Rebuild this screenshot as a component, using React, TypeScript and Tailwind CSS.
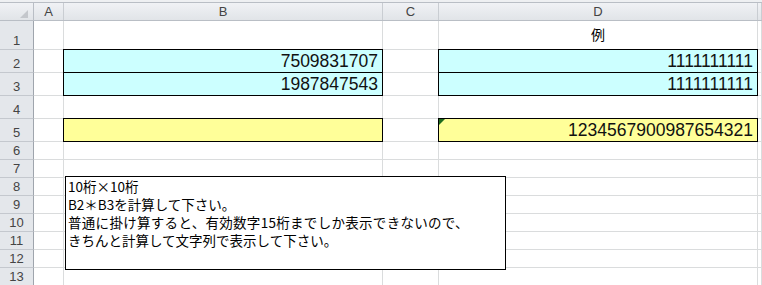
import React from "react"

const rowHeights = ["h-[29px]", "h-[23px]", "h-[23px]", "h-[23px]", "h-[23px]", "h-[18px]", "h-[18px]", "h-[18px]", "h-[18px]", "h-[18px]", "h-[18px]", "h-[18px]", "h-[18px]"]

const colWidths = ["w-[30px]", "w-[319px]", "w-[56px]", "w-[319px]", "flex-1"]
const colNames = ["A", "B", "C", "D", ""]

type Fill = { bg: string; text?: string; flag?: boolean }

// filled ranges keyed by "row-col"
const filled: Record<string, Fill> = {
  "2-1": { bg: "bg-[#ccffff]", text: "7509831707" },
  "3-1": { bg: "bg-[#ccffff]", text: "1987847543" },
  "2-3": { bg: "bg-[#ccffff]", text: "1111111111" },
  "3-3": { bg: "bg-[#ccffff]", text: "1111111111" },
  "5-1": { bg: "bg-[#ffff99]" },
  "5-3": { bg: "bg-[#ffff99]", text: "1234567900987654321", flag: true },
}

function Cell({ row, col }: { row: number; col: number }) {
  const f = filled[`${row}-${col}`]
  return (
    <div className={`${colWidths[col]} relative shrink-0 border-r border-[#dadcdd]`}>
      {f && (
        <div className={`absolute -inset-px z-10 border border-black ${f.bg} flex items-center justify-end pr-[4px]`}>
          {f.flag && (
            <svg className="absolute left-0 top-0" width="6" height="6" viewBox="0 0 6 6">
              <path d="M0 0H6L0 6Z" fill="#1d6a1d" />
            </svg>
          )}
          {f.text && (
            <span className="font-['Liberation_Sans',sans-serif] text-[17.5px] leading-none text-[#111] pt-[1px]">{f.text}</span>
          )}
        </div>
      )}
      {row === 1 && col === 3 && (
        <div className="absolute inset-0 flex items-end justify-center pb-[8px] font-['Noto_Sans_CJK_JP',sans-serif] text-[14px] leading-none text-black">
          例
        </div>
      )}
    </div>
  )
}

export default function App() {
  return (
    <div className="relative w-[762px] h-[285px] overflow-hidden bg-white font-['Liberation_Sans',sans-serif]">
      <div className="h-[2px] bg-[#eef0f2]" />
      {/* column header */}
      <div className="flex h-[19px] border-t border-b border-[#b9bec5] bg-gradient-to-b from-[#f0f2f5] to-[#e1e4e8]">
        <div className="relative w-[34px] shrink-0 border-r border-[#b9bec5]">
          <svg className="absolute left-[20px] top-[7px]" width="8" height="8" viewBox="0 0 8 8">
            <path d="M8 0V8H0Z" fill="#c4c7cc" />
          </svg>
        </div>
        {colNames.map((c, i) => (
          <div
            key={i}
            className={`${colWidths[i]} shrink-0 border-r border-[#c9cdd2] flex items-center justify-center text-[13px] leading-none text-[#444]`}
          >
            {c}
          </div>
        ))}
      </div>
      {/* rows */}
      {rowHeights.map((h, r) => (
        <div key={r} className={`flex ${h} border-b border-[#dadcdd]`}>
          <div className="w-[34px] shrink-0 -mb-px border-r border-b border-r-[#9fa5ad] border-b-[#c4c8ce] bg-[#e4e7eb] flex items-end justify-center pb-[2px] text-[13px] leading-none text-[#444]">
            {r + 1}
          </div>
          {colNames.map((_, c) => (
            <Cell key={c} row={r + 1} col={c} />
          ))}
        </div>
      ))}

      {/* text box over the sheet */}
      <div className="absolute left-[65px] top-[176px] z-20 w-[441px] h-[94px] border border-black bg-white pl-[2px] font-['Noto_Sans_CJK_JP',sans-serif] text-[13.5px] leading-[18px] text-black">
        <div>10桁×10桁</div>
        <div>B2＊B3を計算して下さい。</div>
        <div className="tracking-[0.3px]">普通に掛け算すると、有効数字15桁までしか表示できないので、</div>
        <div>きちんと計算して文字列で表示して下さい。</div>
      </div>
    </div>
  )
}
